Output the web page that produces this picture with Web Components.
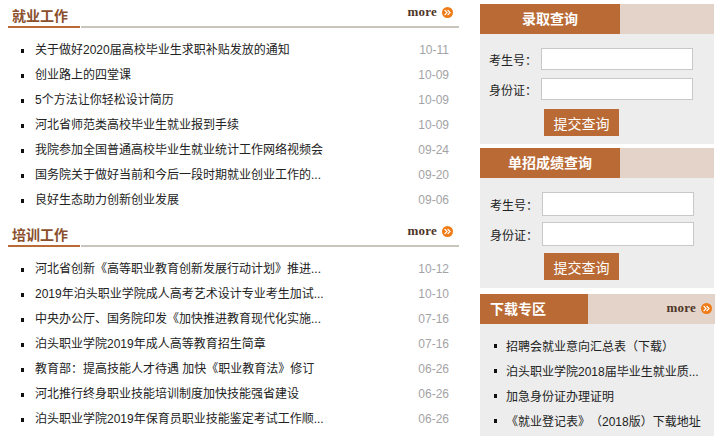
<!DOCTYPE html>
<html lang="zh">
<head>
<meta charset="utf-8">
<title>就业工作</title>
<style>
html, body { margin: 0; padding: 0; background: #fff; }
body { font: 12px "Liberation Sans", "Noto Sans CJK SC", sans-serif; color: #222; text-spacing-trim: space-all; }
</style>
</head>
<body>
<template id="more-tpl">
  <style>
    :host { display: inline-flex; align-items: center; gap: 5px; }
    span { font: bold 13px "Liberation Serif", serif; color: #4f3427; letter-spacing: .2px; }
    svg { display: block; }
  </style>
  <span>more</span>
  <svg width="11" height="11" viewBox="0 0 11 11"><circle cx="5.5" cy="5.5" r="5.5" fill="#f07a13"/><path d="M2.6 3l2.5 2.5L2.6 8M5.6 3l2.5 2.5L5.6 8" fill="none" stroke="#fff" stroke-width="1.1"/></svg>
</template>

<template id="news-tpl">
  <style>
    :host { display: block; }
    .head { height: 28px; display: flex; align-items: flex-start; }
    h2 { margin: 0; width: 68px; padding: 0 0 0 4px; height: 26px; line-height: 33px; font-size: 14px; font-weight: bold; color: #8a4f2c; border-bottom: 2px solid #b96a35; }
    .rule { flex: 1; height: 22px; padding: 4px 6px 0 0; border-bottom: 2px solid #c9c5bd; margin-left: 1px; display: flex; justify-content: flex-end; align-items: flex-start; }
    .body { padding-top: 10px; }
  </style>
  <div class="head"><h2></h2><div class="rule"><more-link></more-link></div></div>
  <div class="body"><slot></slot></div>
</template>

<template id="row-tpl">
  <style>
    :host { display: flex; height: 25px; line-height: 25px; align-items: center; padding-left: 13px; color: #222; }
    i { width: 3px; height: 4px; background: #111; margin-right: 11px; flex: none; }
    .t { width: 288px; white-space: nowrap; flex: none; }
    .d { margin-left: auto; width: 31px; margin-right: 10px; color: #a3a3a6; text-align: right; white-space: nowrap; }
  </style>
  <i></i><span class="t"><slot></slot></span><span class="d"></span>
</template>

<template id="query-tpl">
  <style>
    :host { display: block; background: #ededed; }
    .head { display: flex; height: 30px; background: #e3d3c8; }
    h2 { margin: 0; width: 140px; text-align: center; line-height: 31px; font-size: 14px; font-weight: bold; color: #fff; background: #b96a35; }
    form { margin: 0; padding: 14px 0 8px var(--pad, 9px); display: grid; grid-template-columns: 52px 152px; row-gap: var(--gap, 8px); align-items: center; }
    label { color: #222; white-space: nowrap; }
    input { box-sizing: border-box; width: 152px; height: var(--field, 22px); border: 1px solid #c8c8c8; background: #fff; margin: 0; padding: 0; }
    button { grid-column: 2; width: 75px; height: 27px; margin: 1px 0 0 var(--btn, 3px); border: 0; background: #b96a35; color: #fff; font: 14px "Liberation Sans", "Noto Sans CJK SC", sans-serif; padding: 0; }
  </style>
  <div class="head"><h2></h2></div>
  <form onsubmit="return false">
    <label>考生号：</label><input type="text">
    <label>身份证：</label><input type="text">
    <button type="button">提交查询</button>
  </form>
</template>

<template id="down-tpl">
  <style>
    :host { display: block; background: #ededed; height: 142px; }
    .head { display: flex; height: 30px; background: #e3d3c8; justify-content: space-between; padding-right: 3px; margin-right: -1px; }
    h2 { margin: 0; width: 98px; padding-left: 10px; line-height: 31px; font-size: 14px; font-weight: bold; color: #fff; background: #b96a35; }
    more-link { margin-bottom: 2px; }
    .body { padding-top: 9px; }
  </style>
  <div class="head"><h2></h2><more-link></more-link></div>
  <div class="body"><slot></slot></div>
</template>

<template id="file-tpl">
  <style>
    :host { display: flex; height: 25px; align-items: center; padding-left: 14px; color: #222; white-space: nowrap; }
    i { width: 3px; height: 4px; background: #111; margin-right: 9px; flex: none; }
  </style>
  <i></i><slot></slot>
</template>

<template id="layout-tpl">
  <style>
    :host { display: flex; width: 723px; height: 441px; overflow: hidden; padding: 0 0 0 8px; box-sizing: border-box; }
    .l { width: 451px; margin-right: 21px; display: flex; flex-direction: column; gap: 6px; }
    .r { width: 234px; padding-top: 4px; display: flex; flex-direction: column; gap: 4px; }
  </style>
  <div class="l"><slot name="left"></slot></div>
  <div class="r"><slot name="right"></slot></div>
</template>

<page-layout>
  <news-panel slot="left" heading="就业工作">
    <news-row date="10-11">关于做好2020届高校毕业生求职补贴发放的通知</news-row>
    <news-row date="10-09">创业路上的四堂课</news-row>
    <news-row date="10-09">5个方法让你轻松设计简历</news-row>
    <news-row date="10-09">河北省师范类高校毕业生就业报到手续</news-row>
    <news-row date="09-24">我院参加全国普通高校毕业生就业统计工作网络视频会</news-row>
    <news-row date="09-20">国务院关于做好当前和今后一段时期就业创业工作的...</news-row>
    <news-row date="09-06">良好生态助力创新创业发展</news-row>
  </news-panel>
  <news-panel slot="left" heading="培训工作">
    <news-row date="10-12">河北省创新《高等职业教育创新发展行动计划》推进...</news-row>
    <news-row date="10-10">2019年泊头职业学院成人高考艺术设计专业考生加试...</news-row>
    <news-row date="07-16">中央办公厅、国务院印发《加快推进教育现代化实施...</news-row>
    <news-row date="07-16">泊头职业学院2019年成人高等教育招生简章</news-row>
    <news-row date="06-26">教育部：提高技能人才待遇 加快《职业教育法》修订</news-row>
    <news-row date="06-26">河北推行终身职业技能培训制度加快技能强省建设</news-row>
    <news-row date="06-26">泊头职业学院2019年保育员职业技能鉴定考试工作顺...</news-row>
  </news-panel>
  <query-box slot="right" heading="录取查询"></query-box>
  <query-box slot="right" heading="单招成绩查询" style="--pad:10px;--gap:6px;--field:24px;--btn:2px"></query-box>
  <down-box slot="right" heading="下载专区" style="margin-top:2px">
    <file-row>招聘会就业意向汇总表（下载）</file-row>
    <file-row>泊头职业学院2018届毕业生就业质...</file-row>
    <file-row>加急身份证办理证明</file-row>
    <file-row>《就业登记表》（2018版）下载地址</file-row>
  </down-box>
</page-layout>

<script>
function tplClass(id, after) {
  return class extends HTMLElement {
    constructor() {
      super();
      const root = this.attachShadow({mode: "open"});
      root.appendChild(document.getElementById(id).content.cloneNode(true));
      if (after) after(this, root);
    }
  };
}
const setHeading = (el, root) => { root.querySelector("h2").textContent = el.getAttribute("heading"); };
customElements.define("more-link", tplClass("more-tpl"));
customElements.define("news-panel", tplClass("news-tpl", setHeading));
customElements.define("news-row", tplClass("row-tpl", (el, root) => {
  root.querySelector(".d").textContent = el.getAttribute("date");
}));
customElements.define("query-box", tplClass("query-tpl", setHeading));
customElements.define("down-box", tplClass("down-tpl", setHeading));
customElements.define("file-row", tplClass("file-tpl"));
customElements.define("page-layout", tplClass("layout-tpl"));
</script>
</body>
</html>
